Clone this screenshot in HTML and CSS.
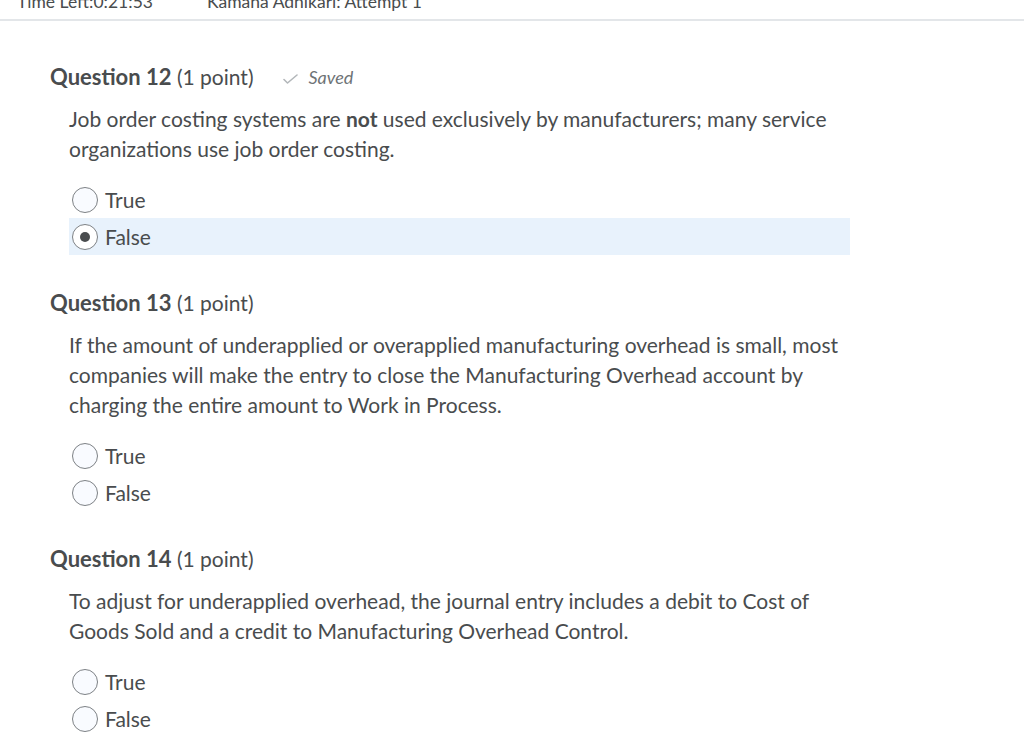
FILE: index.html
```html
<!DOCTYPE html>
<html>
<head>
<meta charset="utf-8">
<link rel="stylesheet" href="styles.css">
</head>
<body>
<div class="topbar">
  <div class="topbar-inner">
    <span class="timeleft">Time Left:0:21:53</span>
    <span class="attempt">Kamana Adhikari: Attempt 1</span>
  </div>
</div>
<main class="quiz">
  <section class="question">
    <div class="qhead">
      <h2 class="qtitle"><span class="qnum">Question 12</span> (1 point)</h2>
      <span class="saved"><svg class="check" viewBox="0 0 15 10" width="15" height="10"><path d="M1 5.5 L4.5 9 L14 1" fill="none" stroke="#b3b7ba" stroke-width="1.6" stroke-linecap="round" stroke-linejoin="round"/></svg><em>Saved</em></span>
    </div>
    <p class="qtext">Job order costing systems are <b>not</b> used exclusively by manufacturers; many service organizations use job order costing.</p>
    <div class="options">
      <label class="opt"><span class="radio"></span>True</label>
      <label class="opt selected"><span class="radio on"></span>False</label>
    </div>
  </section>
  <section class="question">
    <div class="qhead">
      <h2 class="qtitle"><span class="qnum">Question 13</span> (1 point)</h2>
    </div>
    <p class="qtext">If the amount of underapplied or overapplied manufacturing overhead is small, most companies will make the entry to close the Manufacturing Overhead account by charging the entire amount to Work in Process.</p>
    <div class="options">
      <label class="opt"><span class="radio"></span>True</label>
      <label class="opt"><span class="radio"></span>False</label>
    </div>
  </section>
  <section class="question">
    <div class="qhead">
      <h2 class="qtitle"><span class="qnum">Question 14</span> (1 point)</h2>
    </div>
    <p class="qtext">To adjust for underapplied overhead, the journal entry includes a debit to Cost of Goods Sold and a credit to Manufacturing Overhead Control.</p>
    <div class="options">
      <label class="opt"><span class="radio"></span>True</label>
      <label class="opt"><span class="radio"></span>False</label>
    </div>
  </section>
</main>
</body>
</html>
```

FILE: styles.css
```css
html, body {
  margin: 0;
  padding: 0;
  background: #ffffff;
}
body {
  font-family: Lato, "Noto Sans", sans-serif;
  color: #494c4e;
  overflow: hidden;
  height: 736px;
}
.topbar {
  height: 19px;
  border-bottom: 2px solid #e3e6e9;
  overflow: hidden;
}
.topbar-inner {
  display: flex;
  gap: 54px;
  padding-left: 17px;
  font-size: 17.5px;
  line-height: 20px;
  margin-top: -8px;
  color: #494c4e;
}
.quiz {
  padding: 44px 0 0 50px;
}
.question {
  margin-bottom: 36px;
}
.qhead {
  display: flex;
  align-items: center;
  height: 24px;
}
.qtitle {
  margin: 0;
  font-size: 21px;
  font-weight: 400;
  line-height: 24px;
}
.qnum {
  font-weight: 700;
  font-size: 22px;
}
.saved {
  display: inline-flex;
  align-items: center;
  margin-left: 29px;
  font-size: 18px;
  color: #6e7376;
}
.check {
  margin-right: 11px;
  margin-top: 3px;
}
.qtext {
  margin: 15px 0 0 19px;
  width: 781px;
  font-size: 21px;
  line-height: 30px;
}
.qtext b {
  font-weight: 700;
}
.options {
  margin: 17px 0 0 19px;
  width: 781px;
}
.opt {
  display: flex;
  align-items: center;
  height: 37px;
  font-size: 21px;
  padding-left: 3px;
}
.opt.selected {
  background: #e8f2fc;
}
.radio {
  width: 26px;
  height: 26px;
  border: 1px solid #7d8185;
  border-radius: 50%;
  box-sizing: border-box;
  background: #f9fbff;
  margin-right: 7px;
  display: flex;
  align-items: center;
  justify-content: center;
}
.radio.on {
  background: #ffffff;
}
.radio.on::after {
  content: "";
  width: 10px;
  height: 10px;
  border-radius: 50%;
  background: #494c4e;
}
```
